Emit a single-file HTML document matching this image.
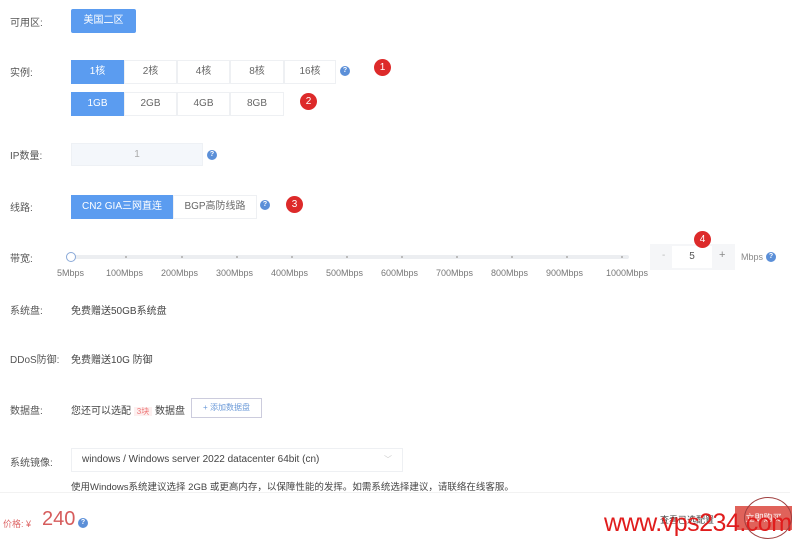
<!DOCTYPE html>
<html><head><meta charset="utf-8"><style>
*{margin:0;padding:0;box-sizing:border-box}
body{width:800px;height:541px;background:#fff;position:relative;overflow:hidden;font-family:"Liberation Sans","Noto Sans CJK SC",sans-serif;font-size:10px;color:#555}
.a{position:absolute}
.lbl{position:absolute;left:10px;font-size:10px;color:#555}
.bt{position:absolute;height:24px;border:1px solid #eef0f3;background:#fff;color:#666;text-align:center;line-height:22px;font-size:10px}
.on{background:#5b9cf0;color:#fff;border-color:#5b9cf0}
.q{position:absolute;width:10px;height:10px;border-radius:50%;background:#5b8fd8;color:#fff;font-size:7px;line-height:10px;text-align:center;font-weight:bold}
.bd{position:absolute;width:17px;height:17px;border-radius:50%;background:#dd2a2a;color:#fff;font-size:10px;line-height:17px;text-align:center}
.tk{position:absolute;top:256px;width:2px;height:2px;background:#bbb}
.ml{position:absolute;top:268px;font-size:9px;color:#777}
</style></head><body>
<div class="lbl" style="top:14px">可用区:</div>
<div class="bt on" style="left:71px;top:9px;width:65px;border-radius:2px">美国二区</div>

<div class="lbl" style="top:64px">实例:</div>
<div class="bt on" style="left:71px;top:60px;width:53px">1核</div>
<div class="bt" style="left:124px;top:60px;width:53px">2核</div>
<div class="bt" style="left:177px;top:60px;width:53px">4核</div>
<div class="bt" style="left:230px;top:60px;width:54px">8核</div>
<div class="bt" style="left:284px;top:60px;width:52px">16核</div>
<div class="q" style="left:340px;top:66px">?</div>
<div class="bd" style="left:374px;top:59px">1</div>

<div class="bt on" style="left:71px;top:92px;width:53px">1GB</div>
<div class="bt" style="left:124px;top:92px;width:53px">2GB</div>
<div class="bt" style="left:177px;top:92px;width:53px">4GB</div>
<div class="bt" style="left:230px;top:92px;width:54px">8GB</div>
<div class="bd" style="left:300px;top:93px">2</div>

<div class="lbl" style="top:147px">IP数量:</div>
<div class="a" style="left:71px;top:143px;width:132px;height:23px;background:#f4f7fb;border:1px solid #eef1f5;text-align:center;line-height:22px;color:#aaa">1</div>
<div class="q" style="left:207px;top:150px">?</div>

<div class="lbl" style="top:199px">线路:</div>
<div class="bt on" style="left:71px;top:195px;width:102px">CN2 GIA三网直连</div>
<div class="bt" style="left:173px;top:195px;width:84px">BGP高防线路</div>
<div class="q" style="left:260px;top:200px">?</div>
<div class="bd" style="left:286px;top:196px">3</div>

<div class="lbl" style="top:250px">带宽:</div>
<div class="a" style="left:71px;top:255px;width:558px;height:4px;background:#eceef1;border-radius:2px"></div>
<div class="tk" style="left:125px"></div><div class="tk" style="left:181px"></div><div class="tk" style="left:236px"></div><div class="tk" style="left:291px"></div><div class="tk" style="left:346px"></div><div class="tk" style="left:401px"></div><div class="tk" style="left:456px"></div><div class="tk" style="left:511px"></div><div class="tk" style="left:566px"></div><div class="tk" style="left:621px"></div>
<div class="a" style="left:66px;top:252px;width:10px;height:10px;border-radius:50%;border:1px solid #8aa9d8;background:#fff"></div>
<div class="ml" style="left:57px">5Mbps</div><div class="ml" style="left:106px">100Mbps</div><div class="ml" style="left:161px">200Mbps</div><div class="ml" style="left:216px">300Mbps</div><div class="ml" style="left:271px">400Mbps</div><div class="ml" style="left:326px">500Mbps</div><div class="ml" style="left:381px">600Mbps</div><div class="ml" style="left:436px">700Mbps</div><div class="ml" style="left:491px">800Mbps</div><div class="ml" style="left:546px">900Mbps</div><div class="ml" style="left:606px">1000Mbps</div>
<div class="a" style="left:650px;top:244px;width:85px;height:26px;background:#f5f6f8"></div>
<div class="a" style="left:662px;top:250px;color:#bbb">-</div>
<div class="a" style="left:672px;top:246px;width:40px;height:22px;background:#fff;text-align:center;line-height:22px;color:#555">5</div>
<div class="a" style="left:719px;top:249px;color:#888;font-size:11px">+</div>
<div class="a" style="left:741px;top:252px;color:#888;font-size:9px">Mbps</div>
<div class="q" style="left:766px;top:252px">?</div>
<div class="bd" style="left:694px;top:231px">4</div>

<div class="lbl" style="top:302px">系统盘:</div>
<div class="a" style="left:71px;top:302px;color:#444">免费赠送50GB系统盘</div>
<div class="lbl" style="top:351px">DDoS防御:</div>
<div class="a" style="left:71px;top:351px;color:#444">免费赠送10G 防御</div>
<div class="lbl" style="top:402px">数据盘:</div>
<div class="a" style="left:71px;top:402px;color:#444">您还可以选配 <span style="background:#fdf0f0;color:#e77;font-size:8px;padding:0 3px">3块</span> 数据盘</div>
<div class="a" style="left:191px;top:398px;width:71px;height:20px;border:1px solid #ccd;text-align:center;line-height:18px;font-size:8px;color:#6b9ad8">+ 添加数据盘</div>
<div class="lbl" style="top:454px">系统镜像:</div>
<div class="a" style="left:71px;top:448px;width:332px;height:24px;border:1px solid #eef0f3;line-height:22px;padding-left:10px;color:#444">windows / Windows server 2022 datacenter 64bit (cn)<span style="position:absolute;right:10px;color:#ccc;font-size:8px">﹀</span></div>
<div class="a" style="left:71px;top:479px;color:#444;font-size:9.5px">使用Windows系统建议选择 2GB 或更高内存，以保障性能的发挥。如需系统选择建议，请联络在线客服。</div>
<div class="a" style="left:0;top:492px;width:790px;height:1px;background:#f2f2f2"></div>
<div class="a" style="left:3px;top:517px;color:#d66;font-size:9px">价格: ¥</div>
<div class="a" style="left:42px;top:508px;color:#d65c5c;font-size:20px">240</div>
<div class="q" style="left:78px;top:518px">?</div>
<div class="a" style="left:660px;top:513px;color:#444;font-size:9px">查看已选配置</div>
<div class="a" style="left:735px;top:506px;width:57px;height:24px;background:#e0625a;color:#fff;font-size:9px;text-align:center;line-height:24px">立即购买</div>
<div class="a" style="left:604px;top:509px;color:#e01c1c;font-size:25px;letter-spacing:-0.5px;line-height:28px">www.vps234.com</div>
<div class="a" style="left:744px;top:497px;width:48px;height:42px;border:1.5px solid #a04040;border-radius:50%"></div>
</body></html>
